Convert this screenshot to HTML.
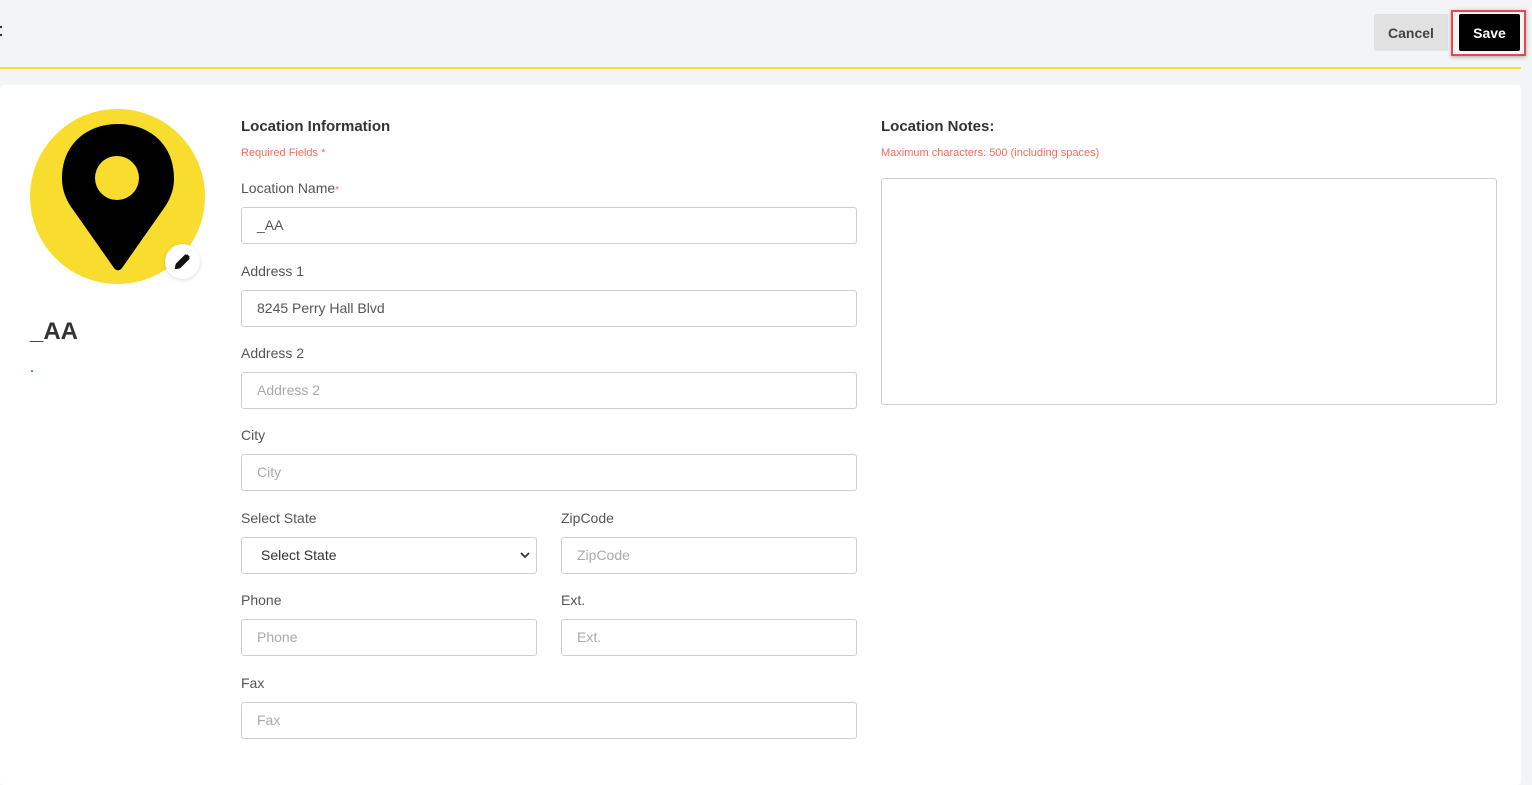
<!DOCTYPE html>
<html><head><style>
*{box-sizing:border-box;margin:0;padding:0}
body{width:1532px;height:752px;background:#f3f4f6;font-family:"Liberation Sans",sans-serif;position:relative;overflow:hidden;color:#333}
.hdr{position:absolute;left:0;top:0;width:1532px;height:67px;background:#f3f4f6}
.yl{position:absolute;left:0;top:67px;width:1521px;height:2px;background:#f8dd2e}
.card{position:absolute;left:0;top:85px;width:1521px;height:700px;background:#fff;border-radius:4px}
.btn{position:absolute;font-weight:bold;font-size:14px;display:flex;align-items:center;justify-content:center;border-radius:2px}
.lbl{position:absolute;font-size:14px;color:#555}
.inp{position:absolute;height:37px;border:1px solid #ccd0d5;border-radius:3px;font-size:14px;color:#aaa;padding-left:15px;line-height:35px}
.h{position:absolute;font-weight:bold;font-size:15px;color:#333}
.req{position:absolute;font-size:11px;color:#f26d5b}
</style></head><body>
<div class="hdr"></div>
<div style="position:absolute;left:0;top:26px;width:2px;height:10px;border-top:2px solid #333;border-bottom:2px solid #333"></div>
<div class="btn" style="left:1374px;top:14px;width:74px;height:37px;background:#e1e1e1;color:#444">Cancel</div>
<div style="position:absolute;left:1451px;top:10px;width:75px;height:46px;border:2px solid #e84848;box-shadow:0 1px 4px rgba(0,0,0,.3)"></div>
<div class="btn" style="left:1459px;top:14px;width:61px;height:37px;background:#000;color:#fff">Save</div>
<div class="yl"></div>
<div class="card"></div>
<div style="position:absolute;left:30px;top:109px;width:175px;height:175px;border-radius:50%;background:#f8dd2e"></div>
<svg style="position:absolute;left:62px;top:123px" width="112" height="148" viewBox="0 0 112 148"><path d="M52 145 L12 88 C3 76 0 66 0 55 C0 22 24 1 56 1 C88 1 112 22 112 55 C112 66 109 76 100 88 L60 145 C58 148 54 148 52 145 Z" fill="#000"/><circle cx="55" cy="55" r="22" fill="#f8dd2e"/></svg>
<div style="position:absolute;left:165px;top:244px;width:35px;height:35px;border-radius:50%;background:#fff;box-shadow:0 1px 4px rgba(0,0,0,.15)"></div>
<svg style="position:absolute;left:175px;top:254px" width="15" height="15" viewBox="0 0 16 16"><path d="M1 15l1-4 9-9 3 3-9 9z M12 1l3 3" stroke="#111" stroke-width="2.5" fill="#111"/></svg>
<div style="position:absolute;left:30px;top:318px;font-size:24px;font-weight:bold;color:#333">_AA</div>
<div style="position:absolute;left:31px;top:370px;width:2px;height:2px;background:#4a90e2"></div>

<div class="h" style="left:241px;top:118px">Location Information</div>
<div class="req" style="left:241px;top:147px">Required Fields *</div>
<div class="lbl" style="left:241px;top:180px">Location Name<span style="color:#f26d5b;font-size:10px">*</span></div>
<div class="inp" style="left:241px;top:207px;width:616px;color:#555">_AA</div>
<div class="lbl" style="left:241px;top:263px">Address 1</div>
<div class="inp" style="left:241px;top:290px;width:616px;color:#555">8245 Perry Hall Blvd</div>
<div class="lbl" style="left:241px;top:345px">Address 2</div>
<div class="inp" style="left:241px;top:372px;width:616px">Address 2</div>
<div class="lbl" style="left:241px;top:427px">City</div>
<div class="inp" style="left:241px;top:454px;width:616px">City</div>
<div class="lbl" style="left:241px;top:510px">Select State</div>
<div class="inp" style="left:241px;top:537px;width:296px;color:#333;padding-left:19px">Select State<svg style="position:absolute;right:6px;top:14px" width="10" height="7" viewBox="0 0 10 7"><path d="M1 1l4 4 4-4" stroke="#333" stroke-width="1.8" fill="none"/></svg></div>
<div class="lbl" style="left:561px;top:510px">ZipCode</div>
<div class="inp" style="left:561px;top:537px;width:296px">ZipCode</div>
<div class="lbl" style="left:241px;top:592px">Phone</div>
<div class="inp" style="left:241px;top:619px;width:296px">Phone</div>
<div class="lbl" style="left:561px;top:592px">Ext.</div>
<div class="inp" style="left:561px;top:619px;width:296px">Ext.</div>
<div class="lbl" style="left:241px;top:675px">Fax</div>
<div class="inp" style="left:241px;top:702px;width:616px">Fax</div>

<div class="h" style="left:881px;top:118px">Location Notes:</div>
<div class="req" style="left:881px;top:147px">Maximum characters: 500 (including spaces)</div>
<div style="position:absolute;left:881px;top:178px;width:616px;height:227px;border:1px solid #ccd0d5;border-radius:3px"></div>
</body></html>
